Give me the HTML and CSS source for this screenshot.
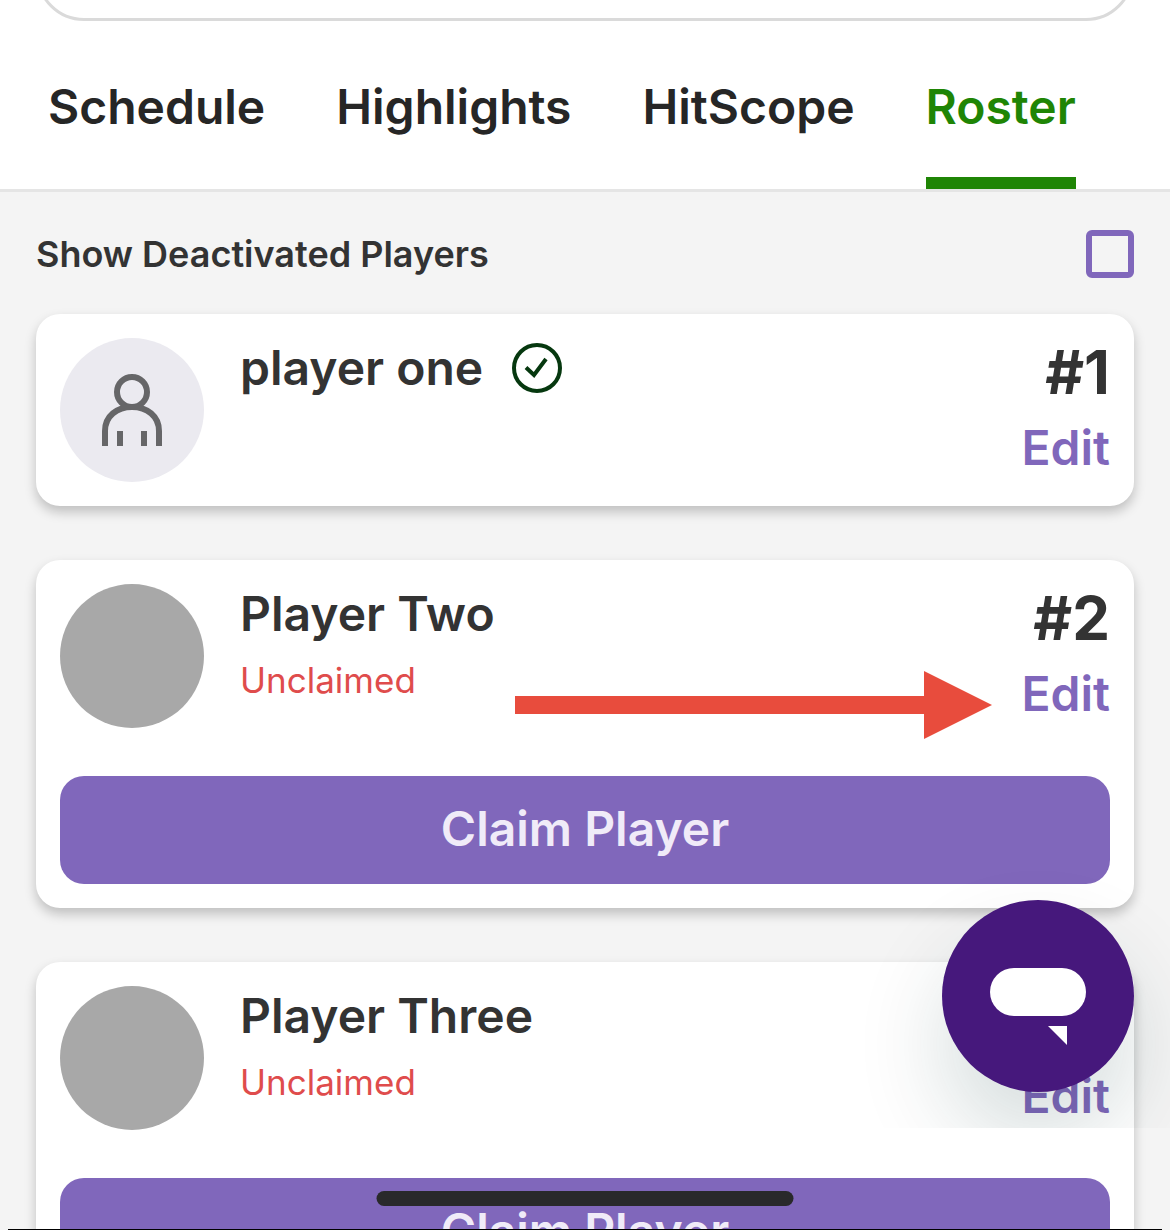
FILE: index.html
```html
<!DOCTYPE html>
<html lang="en">
<head>
  <meta charset="UTF-8" />
  <meta name="viewport" content="width=device-width, initial-scale=1.0">
  <title>Team Roster</title>
  <link rel="stylesheet" href="styles.css">
</head>
<body>
  <header>
    <input type="search" class="search" aria-label="Search">
    <nav class="tabs">
      <a href="#schedule">Schedule</a>
      <a href="#highlights">Highlights</a>
      <a href="#hitscope">HitScope</a>
      <a href="#roster" class="active">Roster</a>
    </nav>
  </header>

  <main>
    <div class="filter">
      <label for="showDeactivated">Show Deactivated Players</label>
      <input type="checkbox" id="showDeactivated">
    </div>

    <section class="card">
      <div class="player">
        <div class="avatar empty">
          <svg width="60" height="72" viewBox="0 0 60 72" fill="none" stroke="#666668" stroke-width="6">
            <circle cx="30" cy="18" r="15" />
            <path d="M3 72V57C3 42 15 33 30 33S57 42 57 57V72M18 72V57M42 72V57" />
          </svg>
        </div>
        <div class="info">
          <h2>player one
            <svg class="check" width="50" height="50" viewBox="0 0 50 50" fill="none" stroke="#06380f" stroke-width="4">
              <circle cx="25" cy="25" r="23" />
              <path d="M14 24.500L22 32L34 16" />
            </svg>
          </h2>
        </div>
        <div class="side">
          <span class="number">#1</span>
          <button class="edit">Edit</button>
        </div>
      </div>
    </section>

    <section class="card">
      <div class="player">
        <div class="avatar"></div>
        <div class="info">
          <h2>Player Two</h2>
          <p>Unclaimed</p>
        </div>
        <div class="side">
          <span class="number">#2</span>
          <button class="edit">Edit</button>
        </div>
      </div>
      <button class="claim">Claim Player</button>
      <svg class="arrow" width="477" height="68" viewBox="0 0 477 68">
        <path fill="#e84c3d" d="M0 25H409V0L477 34L409 68V43H0Z" />
      </svg>
    </section>

    <section class="card">
      <div class="player">
        <div class="avatar"></div>
        <div class="info">
          <h2>Player Three</h2>
          <p>Unclaimed</p>
        </div>
        <div class="side">
          <span class="number">#3</span>
          <button class="edit">Edit</button>
        </div>
      </div>
      <button class="claim">Claim Player</button>
    </section>
  </main>

  <div class="chat-frame">
    <button class="chat" aria-label="Open chat">
      <svg width="96" height="78" viewBox="0 0 96 78" fill="#fff">
        <rect width="96" height="48" rx="24" />
        <path d="M58 58H77V77Z" />
      </svg>
    </button>
  </div>
  <div class="home-bar"></div>
  <div class="screen-edge"></div>
</body>
</html>
```
FILE: styles.css
```css
:root {
  --bg-color: #f4f4f4;
  --text-color: #333333;
  --purple: #8067bb;
  --green: #1f8505;
  --red: #df4c4c;
}

* {
  box-sizing: border-box;
}

body {
  margin: 0;
  height: 100vh;
  overflow: hidden;
  font-family: Inter, sans-serif;
  font-weight: 600;
  background-color: var(--bg-color);
  color: var(--text-color);
}

button {
  font: inherit;
  border: none;
  padding: 0;
  cursor: pointer;
}

header {
  background-color: white;
  border-bottom: 3px solid #e5e5e5;
  padding: 0 36px;
  overflow: hidden;
}

/* mostly scrolled off the top */
.search {
  display: block;
  appearance: none;
  width: 100%;
  height: 144px;
  margin-top: -123px;
  background-color: white;
  border: 3px solid #dadada;
  border-radius: 48px;
}

.tabs {
  display: flex;
  gap: 71px;
  padding: 56px 12px 0;
}

.tabs a {
  font-size: 48px;
  line-height: 60px;
  padding-bottom: 40px;
  border-bottom: 12px solid transparent;
  color: #262626;
  text-decoration: none;
}

.tabs a.active {
  color: var(--green);
  border-color: var(--green);
}

main {
  display: flex;
  flex-direction: column;
  padding: 38px 36px;
}

.filter {
  display: flex;
  align-items: center;
  justify-content: space-between;
  margin-bottom: 36px;
  font-size: 36px;
  line-height: 48px;
}

.filter input {
  appearance: none;
  width: 48px;
  height: 48px;
  margin: 0;
  border: 6px solid var(--purple);
  border-radius: 6px;
}

.card {
  position: relative;
  background-color: white;
  border-radius: 24px;
  padding: 24px;
  margin-bottom: 54px;
  box-shadow: 0 6px 12px rgba(0, 0, 0, 0.22);
}

.player {
  display: flex;
  gap: 36px;
}

.avatar {
  display: flex;
  align-items: center;
  justify-content: center;
  width: 144px;
  height: 144px;
  border-radius: 50%;
  background-color: #a8a8a8;
}

.avatar.empty {
  background-color: #ebeaf0;
}

.info {
  flex: 1;
}

.info h2 {
  display: flex;
  align-items: center;
  gap: 29px;
  margin: 0;
  font-size: 48px;
  font-weight: 600;
  line-height: 60px;
}

.info p {
  margin: 12px 0 0;
  font-size: 35px;
  font-weight: 400;
  line-height: 48px;
  color: var(--red);
}

.side {
  display: flex;
  flex-direction: column;
  align-items: flex-end;
  gap: 12px;
}

.number {
  font-size: 60px;
  font-weight: 700;
  line-height: 68px;
}

.edit {
  background-color: transparent;
  color: var(--purple);
  font-size: 48px;
  line-height: 60px;
}

.claim {
  width: 100%;
  height: 108px;
  margin-top: 48px;
  padding-bottom: 4px;
  border-radius: 24px;
  background-color: var(--purple);
  color: #f0ebf8;
  font-size: 48px;
}

.arrow {
  position: absolute;
  top: 111px;
  right: 142px;
}

/* the chat frame cuts off the button's shadow */
.chat-frame {
  position: fixed;
  right: 0;
  bottom: 102px;
  padding: 100px 36px 36px 100px;
  overflow: hidden;
  pointer-events: none;
}

.chat {
  display: flex;
  align-items: center;
  justify-content: center;
  width: 192px;
  height: 192px;
  padding-top: 21px;
  border-radius: 50%;
  background-color: #46187c;
  box-shadow: 0 48px 90px rgba(0, 50, 50, 0.16);
  pointer-events: auto;
}

.home-bar {
  position: fixed;
  left: 50%;
  bottom: 24px;
  width: 417px;
  height: 15px;
  transform: translateX(-50%);
  border-radius: 8px;
  background-color: #29292b;
}

.screen-edge {
  position: fixed;
  left: 8px;
  right: 8px;
  bottom: 0;
  height: 1px;
  background-color: black;
}
```
